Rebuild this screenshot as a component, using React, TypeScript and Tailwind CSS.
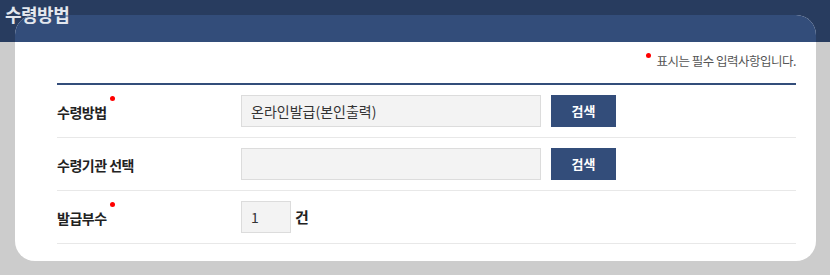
import React from "react"

const font = { fontFamily: '"Noto Sans CJK KR", "Noto Sans", sans-serif' }

function Dot() {
    return <span className="absolute right-[-8px] top-[-6px] w-[5px] h-[5px] rounded-full bg-[#ff0000]" />
}

function Row({ label, required, children }: { label: string; required?: boolean; children: React.ReactNode }) {
    return (
        <div className="flex items-center h-[53px] border-b border-[#e8e8e8]">
            <div className="w-[184px] shrink-0">
                <span className="relative text-[14px] font-bold text-[#222] tracking-[-0.5px]">
                    {label}
                    {required && <Dot />}
                </span>
            </div>
            <div className="flex items-center">{children}</div>
        </div>
    )
}

export default function App() {
    return (
        <div className="h-[275px] bg-[#cccccc] overflow-hidden" style={font}>
            {/* 상단 띠 */}
            <div className="h-[42px] bg-[#283c5f]">
                <h1 className="relative z-10 pl-[5px] pt-[1px] text-[18px] leading-[26px] font-bold text-[#e3e7ee] tracking-[-0.5px]">수령방법</h1>
            </div>
            {/* 카드 */}
            <div className="relative mt-[-27px] ml-[15px] w-[801px] rounded-[20px] bg-white overflow-hidden">
                <div className="h-[27px] bg-[#334d7a]" />
                <div className="pl-[42px] pr-[20px]">
                    <p className="flex justify-end items-start h-[41px] pt-[10px] text-[12.5px] text-[#555] tracking-[-0.5px]">
                        <span className="w-[5px] h-[5px] mt-[1px] mr-[5px] rounded-full bg-[#ff0000]" />
                        표시는 필수 입력사항입니다.
                    </p>
                    <div className="h-[2px] bg-[#334d7a]" />
                    <Row label="수령방법" required>
                        <div className="w-[300px] h-[32px] bg-[#f3f3f3] border border-[#dcdcdc] flex items-center px-[9px] text-[14px] text-[#333]">온라인발급(본인출력)</div>
                        <button className="ml-[10px] w-[65px] h-[32px] bg-[#334d7a] text-white text-[13px] font-bold">검색</button>
                    </Row>
                    <Row label="수령기관 선택">
                        <div className="w-[300px] h-[32px] bg-[#f3f3f3] border border-[#dcdcdc]" />
                        <button className="ml-[10px] w-[65px] h-[32px] bg-[#334d7a] text-white text-[13px] font-bold">검색</button>
                    </Row>
                    <Row label="발급부수" required>
                        <div className="w-[50px] h-[32px] bg-[#f3f3f3] border border-[#dcdcdc] flex items-center px-[9px] text-[14px] text-[#333]">1</div>
                        <span className="ml-[4px] text-[15px] font-bold text-[#222]">건</span>
                    </Row>
                    <div className="h-[17px]" />
                </div>
            </div>
        </div>
    )
}
